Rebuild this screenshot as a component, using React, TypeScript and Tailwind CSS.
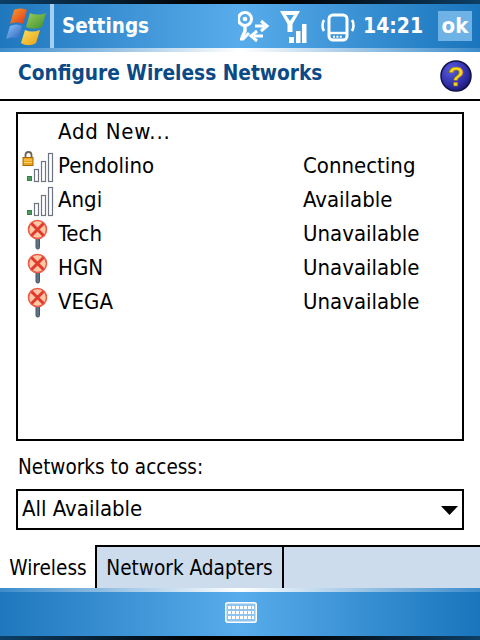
function Signal({ lock }: { lock?: boolean }) {
  return (
    <svg width="36" height="34" viewBox="0 0 36 34" className="shrink-0">
      {lock && (
        <g>
          <path d="M5.5 9V6a3 3 0 0 1 6 0v3" fill="none" stroke="#6b6454" strokeWidth="1.8" />
          <rect x="3" y="8.5" width="10" height="8" fill="#eea31c" stroke="#a8690c" strokeWidth="1" />
          <path d="M4 11h8M4 13.5h8" stroke="#ffd36a" strokeWidth="1" />
        </g>
      )}
      <rect x="7.5" y="27.5" width="4" height="4" fill="#4b9a5e" stroke="#3a7f52" strokeWidth="1" />
      <rect x="14.5" y="20.5" width="4" height="12" fill="#fff" stroke="#6e7480" strokeWidth="1.2" />
      <rect x="21.5" y="12.5" width="4" height="20" fill="#fff" stroke="#6e7480" strokeWidth="1.2" />
      <rect x="28.5" y="4.5" width="4" height="28" fill="#fff" stroke="#6e7480" strokeWidth="1.2" />
    </svg>
  );
}
function Unavail() {
  return (
    <svg width="36" height="34" viewBox="0 0 36 34" className="shrink-0">
      <rect x="16" y="20" width="3.5" height="12" rx="1.5" fill="#5f7286" stroke="#47566a" strokeWidth="1" />
      <circle cx="17.5" cy="12.5" r="9" fill="#ffc8a4" stroke="#ee5a48" strokeWidth="1.6" />
      <path d="M11.5 6.5l12 12M23.5 6.5l-12 12" stroke="#e2392e" strokeWidth="3" />
    </svg>
  );
}
const rows: [string, string, string][] = [
  ["Pendolino", "Connecting", "lock"],
  ["Angi", "Available", "sig"],
  ["Tech", "Unavailable", "x"],
  ["HGN", "Unavailable", "x"],
  ["VEGA", "Unavailable", "x"],
];
export default function App() {
  return (
    <div className="w-[480px] h-[640px] bg-white flex flex-col overflow-hidden text-black text-[22px] leading-[34px]" style={{ fontFamily: '"DejaVu Sans Condensed","Noto Sans","Liberation Sans",sans-serif' }}>
      <div className="h-[4px] shrink-0 bg-[linear-gradient(90deg,#0d3f66_0%,#000_42%,#000_60%,#0d3f66_100%)]" />
      <div className="h-[44px] shrink-0 flex items-center bg-[linear-gradient(90deg,#1f77bd_0%,#58aceb_50%,#1a75bc_100%)] text-white font-bold">
        <svg width="50" height="44" viewBox="0 4 50 44" className="shrink-0">
          <defs>
            <linearGradient id="r" x1="0" y1="0" x2="1" y2="1"><stop offset="0" stopColor="#f5a02c" /><stop offset="1" stopColor="#e0341c" /></linearGradient>
            <linearGradient id="g" x1="0" y1="0" x2="1" y2="1"><stop offset="0" stopColor="#9ccf5a" /><stop offset="1" stopColor="#3d8f30" /></linearGradient>
            <linearGradient id="b" x1="0" y1="0" x2="1" y2="1"><stop offset="0" stopColor="#8fc4f4" /><stop offset="1" stopColor="#2a62c4" /></linearGradient>
            <linearGradient id="y" x1="0" y1="0" x2="1" y2="1"><stop offset="0" stopColor="#f8e060" /><stop offset="1" stopColor="#eaa010" /></linearGradient>
          </defs>
          <path d="M14 10c4-2 9-2 13 0l-4 14c-4-2-9-2-13 0z" fill="url(#r)" />
          <path d="M30 13c5 2 11 2 16 0l-4 14c-5 2-11 2-16 0z" fill="url(#g)" />
          <path d="M10 26c4-2 8-2 12 0l-4 13c-4-2-8-2-12 0z" fill="url(#b)" />
          <path d="M25 30c5 2 10 2 15 0l-4 13c-5 3-10 3-15 0z" fill="url(#y)" />
        </svg>
        <div className="w-[4px] h-full shrink-0 bg-[#a4cff0]" />
        <div className="ml-[8px] text-[20.5px]">Settings</div>
        <div className="ml-auto flex items-center">
          <svg width="36" height="44" viewBox="238 4 36 44" fill="none" stroke="#fff" strokeWidth="3">
            <circle cx="245" cy="19" r="6.5" />
            <circle cx="245" cy="19" r="1.6" fill="#fff" strokeWidth="1.5" />
            <path d="M245 25v6l-3 7" strokeWidth="3.4" />
            <path d="M249 33l-6 6h-3" strokeWidth="3" />
            <path d="M255 26h9M261 21l6 5-6 5" strokeWidth="3" />
            <path d="M263 36h-9M257 31l-6 5 6 5" strokeWidth="3" />
          </svg>
          <svg className="ml-[4px]" width="32" height="44" viewBox="278 4 32 44" fill="#fff">
            <path d="M280 11h20L292.5 24v8h-5v-8zM286 15l4 6 4-6z" fillRule="evenodd" />
            <rect x="289" y="37" width="5" height="6" />
            <rect x="296" y="31" width="4.5" height="12" />
            <rect x="302" y="24" width="4.5" height="19" />
          </svg>
          <svg className="ml-[10px]" width="36" height="44" viewBox="320 4 36 44" fill="none" stroke="#fff" strokeWidth="3">
            <rect x="329" y="15" width="18" height="25" rx="4" />
            <path d="M329 33h18" strokeWidth="2.4" />
            <path d="M333 36.7h10" strokeDasharray="2 1.4" strokeWidth="2" />
            <path d="M324 20c-2 3-2 8 0 11M352 20c2 3 2 8 0 11" strokeWidth="2.6" />
          </svg>
          <div className="ml-[7px] w-[71px] text-[21px]">14:21</div>
          <div className="ml-[4px] mr-[8px] w-[34px] h-[30px] bg-[#6fb2e6] flex items-center justify-center text-[22px]">ok</div>
        </div>
      </div>
      <div className="h-[4px] shrink-0 bg-[linear-gradient(90deg,#3c8ccc_0%,#ffffff_50%,#3c8ccc_100%)]" />
      <div className="h-[49px] shrink-0 flex items-center justify-between pl-[18px] pr-[8px] border-b-2 border-black text-[#0b4a86] font-bold text-[20.7px]">
        <span className="mb-[6px]">Configure Wireless Networks</span>
        <svg width="32" height="32" viewBox="0 0 32 32">
          <defs>
            <radialGradient id="q" cx="0.35" cy="0.3" r="0.8"><stop offset="0" stopColor="#5a5ce0" /><stop offset="0.7" stopColor="#2c2aa0" /><stop offset="1" stopColor="#16165e" /></radialGradient>
          </defs>
          <circle cx="16" cy="16" r="15" fill="url(#q)" stroke="#10104c" strokeWidth="1.5" />
          <text x="16" y="26" textAnchor="middle" fontSize="27" fontWeight="700" fill="#f8d81c" stroke="#8a6a10" strokeWidth="0.5" fontFamily="Liberation Sans">?</text>
        </svg>
      </div>
      <div className="flex-1 px-[16px] pt-[11px] flex flex-col">
        <div className="h-[329px] border-2 border-black pt-[1px] pl-[2px]">
          <div className="pl-[38px] h-[34px] tracking-[0.8px]">Add New...</div>
          {rows.map(([n, s, k]) => (
            <div key={n} className="flex h-[34px] items-center">
              <div className="w-[38px] shrink-0">{k === "x" ? <Unavail /> : <Signal lock={k === "lock"} />}</div>
              <span className="w-[245px]">{n}</span>
              <span>{s}</span>
            </div>
          ))}
        </div>
        <div className="mt-[9px] h-[34px] pl-[2px] text-[20.5px]">Networks to access:</div>
        <div className="mt-[5px] h-[41px] border-2 border-black flex items-center justify-between pl-[4px] pr-[4px]">
          <span className="mb-[2px]">All Available</span>
          <svg width="17" height="9" viewBox="0 0 17 9" className="mt-[2px]"><path d="M0 0h17L8.5 9z" fill="#000" /></svg>
        </div>
      </div>
      <div className="h-[43px] shrink-0 flex bg-[#cddcec] border-t-2 border-black mt-[15px] text-[20.6px]">
        <div className="w-[95px] -mt-[2px] bg-white text-center pl-[1px] pt-[6px]">Wireless</div>
        <div className="w-[189px] border-x-2 border-black text-center pt-[4px]">Network Adapters</div>
      </div>
      <div className="h-[4px] shrink-0 bg-[linear-gradient(90deg,#3c8ccc_0%,#ffffff_50%,#3c8ccc_100%)]" />
      <div className="h-[44px] shrink-0 flex justify-center pt-[10px] bg-[linear-gradient(90deg,#1f77bd_0%,#58aceb_50%,#1a75bc_100%)]">
        <svg width="32" height="21" viewBox="0 0 32 21" className="ml-[2px]">
          <rect x="0.75" y="0.75" width="30.5" height="19.5" rx="2" fill="#8fc4ee" stroke="#fff" strokeWidth="1.5" />
          <path d="M3 5.5h26M3 10.5h26M3 15.5h26" stroke="#fff" strokeWidth="3" strokeDasharray="3 1" />
        </svg>
      </div>
      <div className="h-[4px] shrink-0 bg-[linear-gradient(90deg,#0d3f66_0%,#000_42%,#000_60%,#0d3f66_100%)]" />
    </div>
  );
}
